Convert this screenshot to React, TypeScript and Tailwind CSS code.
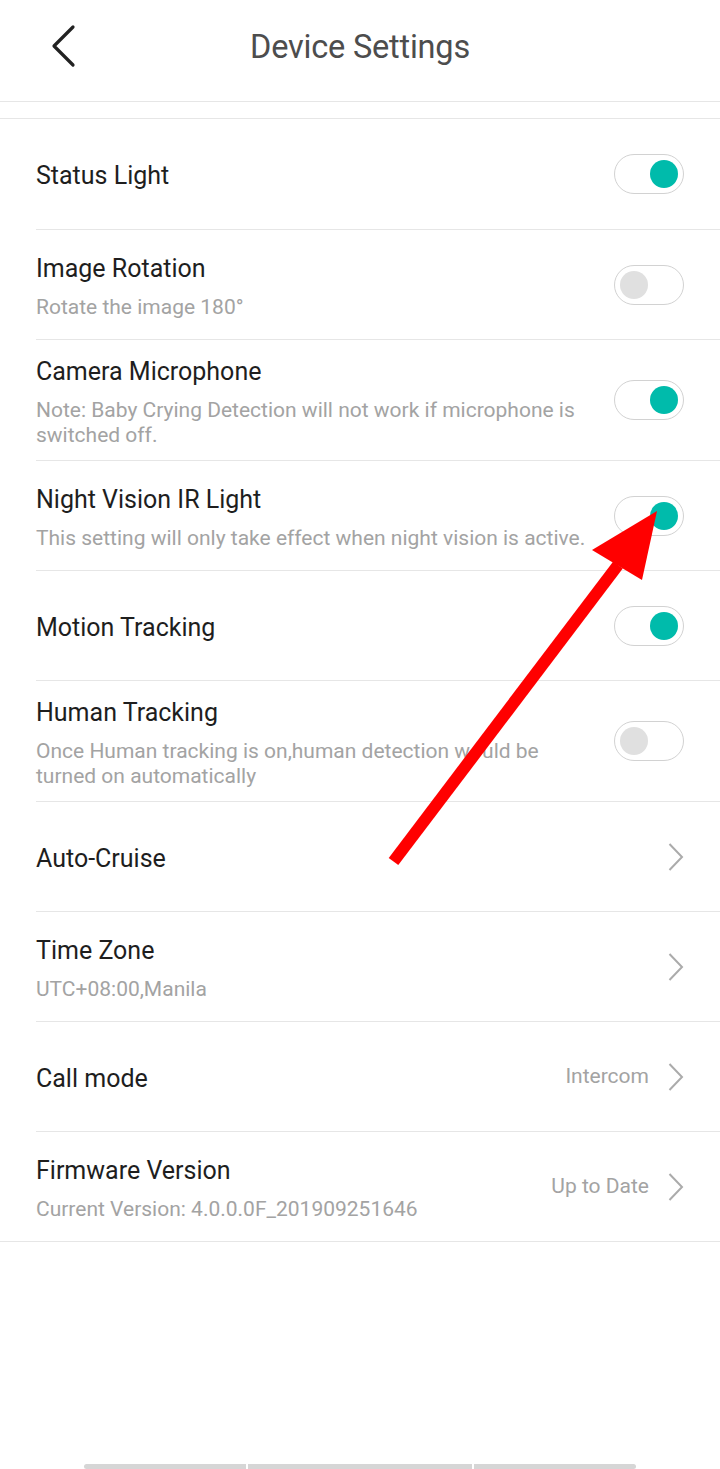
import React from 'react';

type Right =
    | { kind: 'toggle'; on: boolean }
    | { kind: 'link'; value?: string };

interface SettingRow {
    title: string;
    subtitle?: string[];
    height: string;
    right: Right;
}

const rows: SettingRow[] = [
    { title: 'Status Light', height: 'h-[111px]', right: { kind: 'toggle', on: true } },
    { title: 'Image Rotation', subtitle: ['Rotate the image 180°'], height: 'h-[110px]', right: { kind: 'toggle', on: false } },
    {
        title: 'Camera Microphone',
        subtitle: ['Note: Baby Crying Detection will not work if microphone is', 'switched off.'],
        height: 'h-[121px]',
        right: { kind: 'toggle', on: true },
    },
    {
        title: 'Night Vision IR Light',
        subtitle: ['This setting will only take effect when night vision is active.'],
        height: 'h-[110px]',
        right: { kind: 'toggle', on: true },
    },
    { title: 'Motion Tracking', height: 'h-[110px]', right: { kind: 'toggle', on: true } },
    {
        title: 'Human Tracking',
        subtitle: ['Once Human tracking is on,human detection would be', 'turned on automatically'],
        height: 'h-[121px]',
        right: { kind: 'toggle', on: false },
    },
    { title: 'Auto-Cruise', height: 'h-[110px]', right: { kind: 'link' } },
    { title: 'Time Zone', subtitle: ['UTC+08:00,Manila'], height: 'h-[110px]', right: { kind: 'link' } },
    { title: 'Call mode', height: 'h-[110px]', right: { kind: 'link', value: 'Intercom' } },
    {
        title: 'Firmware Version',
        subtitle: ['Current Version: 4.0.0.0F_201909251646'],
        height: 'h-[110px]',
        right: { kind: 'link', value: 'Up to Date' },
    },
];

const Toggle: React.FC<{ on: boolean }> = ({ on }) => (
    <div
        className={`w-[70px] h-[40px] rounded-full border border-[#d2d2d2] bg-white flex items-center px-[5px] ${
            on ? 'justify-end' : 'justify-start'
        }`}
    >
        <div className={`w-[28px] h-[28px] rounded-full ${on ? 'bg-[#00bbab]' : 'bg-[#e0e0e0]'}`} />
    </div>
);

const Chevron: React.FC = () => (
    <svg width="16" height="30" viewBox="0 0 16 30" className="shrink-0">
        <path d="M1.5 2 L14 15 L1.5 28" fill="none" stroke="#ababab" strokeWidth="2" />
    </svg>
);

export default function App() {
    return (
        <div className="relative w-[720px] h-[1469px] bg-white flex flex-col font-['Roboto',sans-serif] overflow-hidden">
            {/* header */}
            <header className="relative h-[102px] shrink-0 border-b border-[#e6e6e6] flex items-center justify-center">
                <svg width="30" height="44" viewBox="0 0 30 44" className="absolute left-[49px] top-[24px]">
                    <path d="M24 3 L5 22 L24 41" fill="none" stroke="#222" strokeWidth="3.2" strokeLinecap="round" strokeLinejoin="round" />
                </svg>
                <h1 className="text-[32.5px] text-[#4d4d4d] tracking-[-0.2px] -mt-[7px]">Device Settings</h1>
            </header>

            <div className="h-[16px] shrink-0" />

            <div className="border-t border-[#e6e6e6]">
                {rows.map((row, i) => {
                    const last = i === rows.length - 1;
                    return (
                        <div key={row.title} className={last ? 'border-b border-[#e6e6e6] pl-[36px]' : 'pl-[36px]'}>
                            <div
                                className={`${last ? 'h-[109px]' : row.height} flex items-center pr-[36px] ${
                                    last ? '' : 'border-b border-[#e6e6e6]'
                                }`}
                            >
                                <div className="flex-1 min-w-0 pt-[4px]">
                                    <div className="text-[25px] leading-[30px] text-[#1e1e1e]">{row.title}</div>
                                    {row.subtitle && (
                                        <div className="mt-[11px] text-[21px] leading-[25px] text-[#a3a3a3]">
                                            {row.subtitle.map((line) => (
                                                <div key={line} className="whitespace-nowrap">{line}</div>
                                            ))}
                                        </div>
                                    )}
                                </div>
                                {row.right.kind === 'toggle' ? (
                                    <Toggle on={row.right.on} />
                                ) : (
                                    <div className="flex items-center gap-[19px]">
                                        {row.right.value && (
                                            <span className="text-[21px] text-[#a3a3a3]">{row.right.value}</span>
                                        )}
                                        <Chevron />
                                    </div>
                                )}
                            </div>
                        </div>
                    );
                })}
            </div>

            <div className="flex-1" />

            {/* gesture bar */}
            <div className="flex justify-center gap-[2px] h-[5px] shrink-0">
                <div className="w-[162px] h-[5px] bg-[#d6d6d6] rounded-l-full" />
                <div className="w-[224px] h-[5px] bg-[#d6d6d6]" />
                <div className="w-[162px] h-[5px] bg-[#d6d6d6] rounded-r-full" />
            </div>

            {/* red annotation arrow */}
            <svg className="absolute inset-0 pointer-events-none" width="720" height="1469" viewBox="0 0 720 1469">
                <line x1="393.5" y1="861.5" x2="618" y2="565" stroke="#ff0000" strokeWidth="12" />
                <polygon points="657,511 592,550 642,580" fill="#ff0000" />
            </svg>
        </div>
    );
}
